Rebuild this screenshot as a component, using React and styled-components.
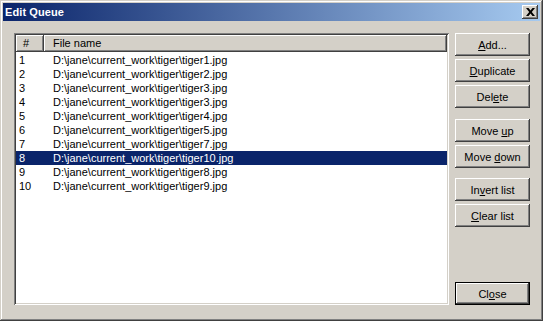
import styled, { createGlobalStyle } from "styled-components";

const files = [
  "tiger1", "tiger2", "tiger3", "tiger3", "tiger4",
  "tiger5", "tiger7", "tiger10", "tiger8", "tiger9",
];

const Global = createGlobalStyle`
  html, body { margin: 0; padding: 0; background: #d4d0c8; }
  body { font-family: "Liberation Sans", Arial, sans-serif; font-size: 11px; }
`;

export default function App() {
  const selected = 7;

  return (
    <>
      <Global />
      <Window>
        <TitleBar>
          <Title>Edit Queue</Title>
          <CloseBox aria-label="close">
            <svg width="9" height="8" viewBox="0 0 9 8">
              <path d="M0 0h2.5l2 2.6L6.5 0H9L5.8 4 9 8H6.5l-2-2.6L2.5 8H0l3.2-4z" fill="#000" />
            </svg>
          </CloseBox>
        </TitleBar>
        <Body>
          <ListBox>
            <HeaderRow>
              <HeadCell $w={28} $pad={7}>#</HeadCell>
              <HeadCell $grow>File name</HeadCell>
            </HeaderRow>
            {files.map((f, i) => (
              <Row key={i} $active={i === selected}>
                <NumCell>{i + 1}</NumCell>
                <NameCell>D:\jane\current_work\tiger\{f}.jpg</NameCell>
              </Row>
            ))}
          </ListBox>
          <Buttons>
            <Button><span><u>A</u>dd...</span></Button>
            <Button><span><u>D</u>uplicate</span></Button>
            <Button><span>Del<u>e</u>te</span></Button>
            <Button $gap={8}><span>Move <u>u</u>p</span></Button>
            <Button><span>Move <u>d</u>own</span></Button>
            <Button $gap={7}><span>In<u>v</u>ert list</span></Button>
            <Button><span><u>C</u>lear list</span></Button>
            <Button $default><span>Cl<u>o</u>se</span></Button>
          </Buttons>
        </Body>
      </Window>
    </>
  );
}

const Window = styled.div`
  width: 543px;
  height: 321px;
  box-sizing: border-box;
  padding: 3px;
  display: flex;
  flex-direction: column;
  background: #d4d0c8;
  box-shadow: inset -1px -1px #404040, inset 1px 1px #d4d0c8,
    inset -2px -2px #808080, inset 2px 2px #ffffff;
`;

const TitleBar = styled.div`
  height: 18px;
  display: flex;
  align-items: center;
  justify-content: space-between;
  padding: 0 2px 0 2px;
  background: linear-gradient(to right, #0a246a, #a6caf0);
`;

const Title = styled.span`
  color: #fff;
  font-weight: bold;
  font-size: 11px;
  letter-spacing: 0.1px;
`;

const CloseBox = styled.div`
  width: 16px;
  height: 14px;
  box-sizing: border-box;
  display: flex;
  align-items: center;
  justify-content: center;
  background: #d4d0c8;
  box-shadow: inset -1px -1px #404040, inset 1px 1px #ffffff,
    inset -2px -2px #808080, inset 2px 2px #d4d0c8;
`;

const Body = styled.div`
  flex: 1;
  display: flex;
  gap: 6px;
  padding: 12px 10px 13px 11px;
`;

const ListBox = styled.div`
  width: 435px;
  height: 272px;
  box-sizing: border-box;
  padding: 2px;
  background: #fff;
  box-shadow: inset 1px 1px #808080, inset -1px -1px #ffffff,
    inset 2px 2px #404040, inset -2px -2px #d4d0c8;
`;

const HeaderRow = styled.div`
  display: flex;
  height: 17px;
  margin-bottom: 1px;
`;

const HeadCell = styled.div`
  box-sizing: border-box;
  width: ${(p) => (p.$w ? `${p.$w}px` : "auto")};
  flex: ${(p) => (p.$grow ? 1 : "none")};
  padding-left: ${(p) => p.$pad ?? 9}px;
  line-height: 16px;
  color: #000;
  background: #d4d0c8;
  box-shadow: inset -1px -1px #404040, inset 1px 1px #ffffff,
    inset -2px -2px #808080;
`;

const Row = styled.div`
  display: flex;
  height: 14px;
  line-height: 14px;
  background: ${(p) => (p.$active ? "#0a246a" : "transparent")};
  color: ${(p) => (p.$active ? "#fff" : "#000")};
`;

const NumCell = styled.div`
  box-sizing: border-box;
  width: 37px;
  padding-left: 3px;
`;

const NameCell = styled.div`
  flex: 1;
`;

const Buttons = styled.div`
  width: 75px;
  display: flex;
  flex-direction: column;
  gap: 3px;
`;

const Button = styled.div`
  height: 23px;
  box-sizing: border-box;
  display: flex;
  align-items: center;
  justify-content: center;
  color: #000;
  background: #d4d0c8;
  margin-top: ${(p) => (p.$default ? "auto" : `${p.$gap ?? 0}px`)};
  border: ${(p) => (p.$default ? "1px solid #000" : "none")};
  box-shadow: inset -1px -1px #404040, inset 1px 1px #ffffff,
    inset -2px -2px #808080;
  u { text-decoration: underline; text-underline-offset: 1px; }
`;
